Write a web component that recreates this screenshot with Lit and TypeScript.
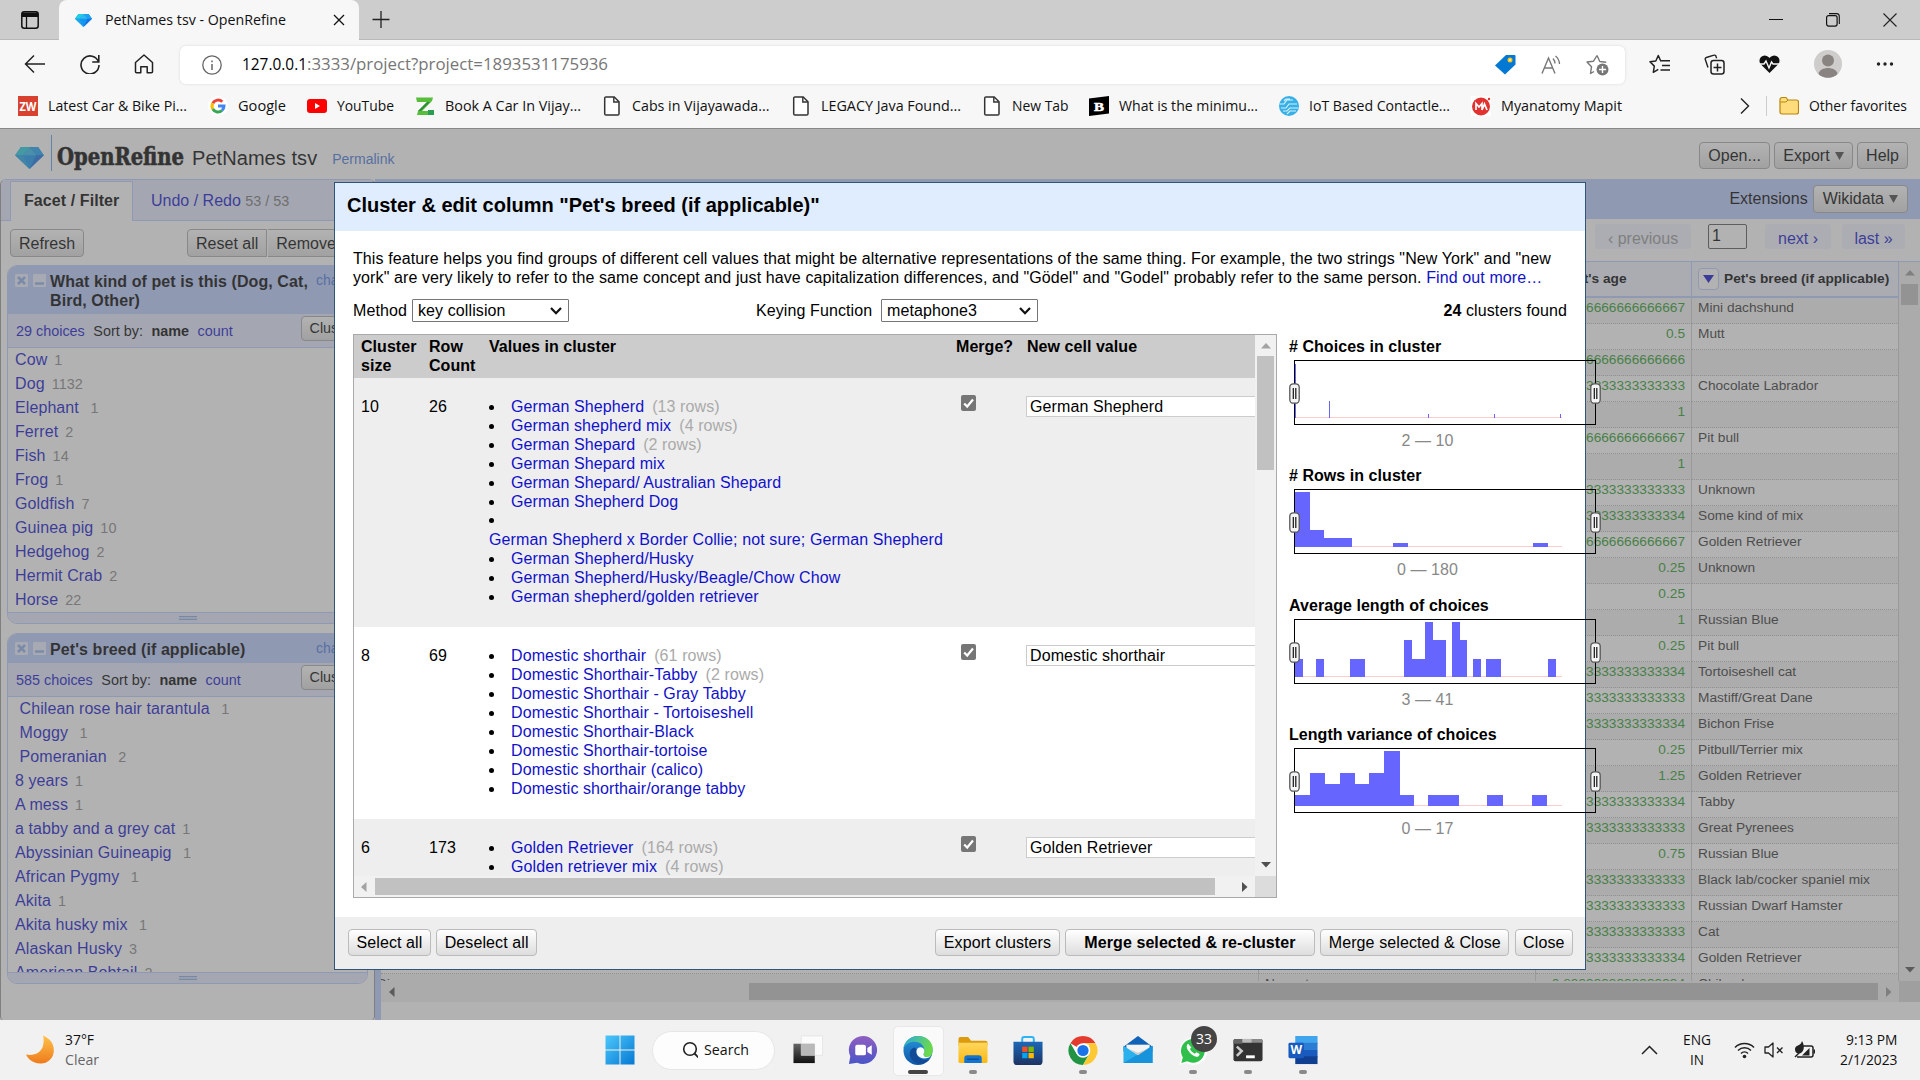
import { LitElement, html, svg, css, nothing } from "lit";
import { customElement } from "lit/decorators.js";

type Choice = { name: string; count: string; lead?: boolean; trail?: boolean };
type ClusterValue = { name: string; rows?: string; own?: boolean };
type Bar = [number, number, number];

const PET_KINDS: Choice[] = [
  { name: "Cow", count: "1" }, { name: "Dog", count: "1132" }, { name: "Elephant", count: "1", trail: true },
  { name: "Ferret", count: "2" }, { name: "Fish", count: "14" }, { name: "Frog", count: "1" },
  { name: "Goldfish", count: "7" }, { name: "Guinea pig", count: "10" }, { name: "Hedgehog", count: "2" },
  { name: "Hermit Crab", count: "2" }, { name: "Horse", count: "22" },
];

const BREEDS: Choice[] = [
  { name: "Chilean rose hair tarantula", count: "1", lead: true, trail: true },
  { name: "Moggy", count: "1", lead: true, trail: true }, { name: "Pomeranian", count: "2", lead: true, trail: true },
  { name: "8 years", count: "1" }, { name: "A mess", count: "1" }, { name: "a tabby and a grey cat", count: "1" },
  { name: "Abyssinian Guineapig", count: "1", trail: true }, { name: "African Pygmy", count: "1", trail: true },
  { name: "Akita", count: "1" }, { name: "Akita husky mix", count: "1", trail: true },
  { name: "Alaskan Husky", count: "3" }, { name: "American Bobtail", count: "2" },
];

const ROWS: [string, string][] = [
  ["0.16666666666666667", "Mini dachshund"], ["0.5", "Mutt"], ["0.41666666666666666", ""],
  ["0.08333333333333333", "Chocolate Labrador"], ["1", ""], ["0.16666666666666667", "Pit bull"], ["1", ""],
  ["0.08333333333333333", "Unknown"], ["0.8333333333333334", "Some kind of mix"],
  ["0.16666666666666667", "Golden Retriever"], ["0.25", "Unknown"], ["0.25", ""], ["1", "Russian Blue"],
  ["0.25", "Pit bull"], ["0.8333333333333334", "Tortoiseshell cat"], ["0.08333333333333333", "Mastiff/Great Dane"],
  ["0.8333333333333334", "Bichon Frise"], ["0.25", "Pitbull/Terrier mix"], ["1.25", "Golden Retriever"],
  ["0.8333333333333334", "Tabby"], ["0.08333333333333333", "Great Pyrenees"], ["0.75", "Russian Blue"],
  ["0.08333333333333333", "Black lab/cocker spaniel mix"], ["0.08333333333333333", "Russian Dwarf Hamster"],
  ["0.08333333333333333", "Cat"], ["0.8333333333333334", "Golden Retriever"], ["0.8333333333333334", "Chihuahua"],
];

const CLUSTERS: { size: string; rows: string; value: string; values: ClusterValue[] }[] = [
  {
    size: "10", rows: "26", value: "German Shepherd",
    values: [
      { name: "German Shepherd", rows: "(13 rows)" }, { name: "German shepherd mix", rows: "(4 rows)" },
      { name: "German Shepard", rows: "(2 rows)" }, { name: "German Shepard mix" },
      { name: "German Shepard/ Australian Shepard" }, { name: "German Shepherd Dog" },
      { name: "German Shepherd x Border Collie; not sure; German Shepherd", own: true },
      { name: "German Shepherd/Husky" }, { name: "German Shepherd/Husky/Beagle/Chow Chow" },
      { name: "German shepherd/golden retriever" },
    ],
  },
  {
    size: "8", rows: "69", value: "Domestic shorthair",
    values: [
      { name: "Domestic shorthair", rows: "(61 rows)" }, { name: "Domestic Shorthair-Tabby", rows: "(2 rows)" },
      { name: "Domestic Shorthair - Gray Tabby" }, { name: "Domestic Shorthair - Tortoiseshell" },
      { name: "Domestic Shorthair-Black" }, { name: "Domestic Shorthair-tortoise" },
      { name: "Domestic shorthair (calico)" }, { name: "Domestic shorthair/orange tabby" },
    ],
  },
  {
    size: "6", rows: "173", value: "Golden Retriever",
    values: [{ name: "Golden Retriever", rows: "(164 rows)" }, { name: "Golden retriever mix", rows: "(4 rows)" }],
  },
];

/* Histogram bars as [x, width, height] */
const FACETS: { title: string; range: string; bars: Bar[] }[] = [
  { title: "# Choices in cluster", range: "2 — 10", bars: [[0, 1, 54], [34, 1, 17], [133, 1, 4], [199, 1, 4], [265, 1, 4]] },
  { title: "# Rows in cluster", range: "0 — 180", bars: [[0, 14.5, 55], [14, 14.5, 17], [28, 29, 9], [98, 15, 4], [238, 15, 4]] },
  {
    title: "Average length of choices", range: "3 — 41",
    bars: [[0, 8, 18], [20.5, 8, 18], [54.5, 15, 18], [109, 8, 37], [117, 13, 18], [129.5, 8, 55], [137, 14, 37],
      [156.5, 8, 55], [164, 7.5, 37], [177.5, 8, 18], [191, 14.5, 18], [252.5, 8, 18]],
  },
  {
    title: "Length variance of choices", range: "0 — 17",
    bars: [[0, 15, 11], [14.5, 15.5, 33], [29, 16, 22], [44.5, 15, 33], [59, 15, 22], [74, 15, 33], [89, 15.5, 55],
      [104, 15, 11], [133, 30.5, 11], [192, 15.5, 11], [236.5, 15.5, 11]],
  },
];

const icon = (w: number, h: number, body: unknown, vb = `0 0 ${w} ${h}`) =>
  html`<svg class="ic" width=${w} height=${h} viewBox=${vb} fill="none">${body}</svg>`;

/* One line of interface text set to an exact advance width */
const fit = (text: string, w: number, size = 14.5, color = "#111") =>
  html`<svg class="ic" width=${w} height="20" overflow="visible"><text x="0" y="15" font-size=${size} fill=${color} textLength=${w} lengthAdjust="spacingAndGlyphs">${text}</text></svg>`;

const docIcon = () => icon(20, 20, svg`<path d="M4 .9h8.2L17 5.8v12a1.3 1.3 0 0 1-1.3 1.3H4a1.3 1.3 0 0 1-1.3-1.3V2.200A1.300 1.300 0 0 1 4 .9z" fill="#fff" stroke="#333" stroke-width="1.500"/><path d="M11.800 1v5h5" stroke="#333" stroke-width="1.400"/>`);

const diamond = (w: number, h: number) => icon(w, h, svg`
  <path d="M6 0h18l6 8.500L15 23 0 8.500z" fill="#1296f0"/><path d="M6 0h9L8 8.500H0z" fill="#22cfe0"/>
  <path d="M15 0h9l6 8.500h-8z" fill="#1ba2f4"/><path d="M15 0l7 8.500H8z" fill="#2fb9ee"/>
  <path d="M22 8.500h8L15 23z" fill="#1571e6"/><path d="M0 8.500h8L15 23z" fill="#1ca5ea"/>`, "0 0 30 23");

const BOOKMARKS: [string, number, () => unknown][] = [
  ["Latest Car & Bike Pi...", 139, () => icon(20, 20, svg`<rect width="20" height="20" fill="#d8412f"/><text x="1.500" y="14.500" font-size="11.500" font-weight="bold" fill="#fff" textLength="17" lengthAdjust="spacingAndGlyphs">ZW</text>`)],
  ["Google", 48, () => icon(20, 20, svg`<circle cx="10" cy="10" r="10" fill="#fff"/><g stroke-width="3"><path d="M14.300 5.800A6 6 0 0 0 4.800 7.200" stroke="#ea4335"/><path d="M4.800 7.200a6 6 0 0 0 0 5.800" stroke="#fbbc05"/><path d="M4.800 13a6 6 0 0 0 9.200 1.500" stroke="#34a853"/><path d="M14 14.500A6 6 0 0 0 16 10h-6" stroke="#4285f4"/></g>`)],
  ["YouTube", 57, () => icon(20, 20, svg`<rect y="3" width="20" height="14" rx="3" fill="#f00"/><path d="M8 7l5 3-5 3z" fill="#fff"/>`)],
  ["Book A Car In Vijay...", 136, () => icon(20, 20, svg`<path d="M1 1.500h17l-1 3.500L7 15h11l-2 4H2l1-4L12 6H2z" fill="#57bd3b"/><path d="M3 15l9-9h3L6 15z" fill="#2c8d3a"/><path d="M13 14h6v5h-6z" fill="#2a9e50"/>`)],
  ["Cabs in Vijayawada...", 137.5, docIcon],
  ["LEGACY Java Found...", 140, docIcon],
  ["New Tab", 56.5, docIcon],
  ["What is the minimu...", 139, () => icon(20, 20, svg`<path d="M0 2.500L20 0v17.500L0 20z" fill="#000"/><text x="5" y="14.500" font-size="13" font-weight="bold" font-family="Liberation Serif, serif" fill="#fff" stroke="#fff" stroke-width=".5" textLength="10" lengthAdjust="spacingAndGlyphs">B</text>`)],
  ["IoT Based Contactle...", 141, () => icon(20, 20, svg`<circle cx="10" cy="10" r="10" fill="#36b0e6"/><path d="M1 8h4l3-4h6M2 12h5l3-4h8M4 15h4l3-3h8M8 18l3-3h6M5 5l2-2h4" stroke="#d5f0fb" stroke-width="1.200"/>`)],
  ["Myanatomy Mapit", 121, () => icon(20, 20, svg`<rect width="20" height="20" fill="#fff"/><circle cx="10" cy="10.500" r="9" fill="#e2322f"/><path d="M5 14V7.500l3 3.500 3-3.500V14M11 14l2.500-6L16 14" stroke="#fff" stroke-width="1.700"/><circle cx="18" cy="3" r="1.200" fill="#e2322f"/>`)],
];

const TASKS: { art: () => unknown; state?: string; badge?: string }[] = [
  { art: () => svg`<path d="M1 9h22v20H1z" fill="url(#tvd)"/><path d="M9 1h22v20H9z" fill="#fff" fill-opacity=".7" stroke="#ddd" stroke-width=".6"/><path d="M9 9h14v12H9z" fill="#b9b9b9"/>` },
  { art: () => svg`<path d="M16 1a14.500 14.500 0 1 1-6 27.700L1.500 30l1.400-8A14.500 14.500 0 0 1 16 1z" fill="url(#cht)"/><rect x="8" y="10" width="11" height="11" rx="2" fill="#fff"/><path d="M20.500 13.500L25 10.500v10l-4.500-3z" fill="#fff"/>` },
  {
    state: "active",
    art: () => svg`<circle cx="16" cy="16" r="15" fill="url(#edg)"/><path d="M31 12C29.500 5 23 1 16 1 8 1 1.500 7 1 14c2-4.500 6.500-7 11-7 7 0 10.500 4.500 10.500 9 0 2-1 3.500-1 4.500 0 1.500 2 2.500 4.500 2.500 3 0 5-3 5-7z" fill="url(#edn)"/><path d="M12.500 13c-6 1-7 10-.5 14.500 5 3.500 12 2.500 16-2.500-3 1.500-7.500 1-9.500-.5-3-2-4.500-5-3-8.500z" fill="#114a96"/><path d="M16 13.500c-2 1.500-2.300 5-.5 7.500 1.500 2 4 3.300 7 3.300 3 0 5.300-1 6.500-2.300-5 2-7.500-.5-7.300-2 .2-1.200 1.100-2 .8-4.200-.5-3-4-4-6.500-2.300z" fill="#f4fbff"/>`,
  },
  { state: "open", art: () => svg`<path d="M1 4a2 2 0 0 1 2-2h8l3 4h15a2 2 0 0 1 2 2v3H1z" fill="#dc9b0c"/><path d="M1 8h30v19a2 2 0 0 1-2 2H3a2 2 0 0 1-2-2z" fill="url(#fld)"/><path d="M7 29v-5a3 3 0 0 1 3-3h12a3 3 0 0 1 3 3v5z" fill="#1274cc"/><path d="M10 25h12" stroke="#0b4e9b" stroke-width="1.500"/>` },
  { art: () => svg`<path d="M10 8V4a2 2 0 0 1 2-2h8a2 2 0 0 1 2 2v4" stroke="#2bb5f2" stroke-width="2"/><path d="M1 7h30v20a4 4 0 0 1-4 4H5a4 4 0 0 1-4-4z" fill="url(#str)"/><path d="M10 12h5.500v5.500H10z" fill="#f25022"/><path d="M16.500 12H22v5.500h-5.500z" fill="#7fba00"/><path d="M10 18.500h5.500V24H10z" fill="#00a4ef"/><path d="M16.500 18.500H22V24h-5.500z" fill="#ffb900"/>` },
  { state: "open", art: () => svg`<circle cx="16" cy="16" r="15" fill="#fff"/><path d="M16 16L3 8.500A15 15 0 0 1 29 8.500H16z" fill="#e33b2e"/><path d="M3 8.500A15 15 0 0 0 16 31l6.500-11.500L16 16 9.500 19.500z" fill="#229342"/><path d="M29 8.500A15 15 0 0 1 16 31l6.500-11.500L22 10l-6-1.500z" fill="#fcc934"/><circle cx="16" cy="16" r="7.500" fill="#fff"/><circle cx="16" cy="16" r="5.800" fill="#1a73e8"/>` },
  { art: () => svg`<path d="M1 12L16 1l15 11v5H1z" fill="#0f62b8"/><path d="M4 10h24v10H4z" fill="#f3f3f3"/><path d="M1 11l15 10L31 11v18H1z" fill="#2bb0ee"/><path d="M1 29L31 11v18z" fill="#1793dc"/><path d="M6 14.300l10 6.500 10-6.500-10 4z" fill="#ccc"/>` },
  { state: "open", badge: "33", art: () => svg`<path d="M2 31l2-7.500A14.300 14.300 0 1 1 9.500 29z" fill="#fff"/><path d="M4 29l1.500-6A12.300 12.300 0 1 1 10 27.200z" fill="#30bf4a"/><path d="M11 9c-2 1-2 4 0 7s5 6 8.500 6.500c2 0 3.500-1.500 3.300-3l-3.300-1.700-1.700 1.500c-2-.8-4-2.800-5-4.800l1.500-1.700z" fill="#fff"/>` },
  { state: "open", art: () => svg`<rect x="1" y="4" width="30" height="23" rx="2" fill="#333"/><path d="M1 6a2 2 0 0 1 2-2h7v5H1z" fill="#666"/><path d="M10 4h10v4H10z" fill="#bbb"/><path d="M20 4h9a2 2 0 0 1 2 2v2H20z" fill="#8a8a8a"/><path d="M4.500 12l5 4.500-5 5" stroke="#ccc" stroke-width="2.600"/><path d="M14 21h9v3h-9z" fill="#fff"/>` },
  { state: "open", art: () => svg`<path d="M8 1h23v8H8z" fill="#41a5ee"/><path d="M8 8h23v7.500H8z" fill="#2b7cd3"/><path d="M8 15.500h23V23H8z" fill="#185abd"/><path d="M8 22h23v8H8z" fill="#103f91"/><rect x="1" y="8" width="16" height="16" rx="1.500" fill="#185abd"/><text x="3" y="20" font-size="12" font-weight="bold" fill="#fff" textLength="12" lengthAdjust="spacingAndGlyphs">W</text>` },
];

@customElement("app-root")
export class AppRoot extends LitElement {
  static styles = css`
    :host { display: flex; flex-direction: column; width: 1920px; height: 1080px; overflow: hidden;
      font: 16px/19px "Liberation Sans", Arial, sans-serif; color: #000; background: #fff; }
    * { box-sizing: border-box; }
    .ic { display: block; flex: none; }
    .ui { font-family: "Open Sans", "Noto Sans", sans-serif; }
    .link { color: #11c; }
    .grow { flex: 1; }

    .tabs { height: 40px; flex: none; display: flex; background: #cdcdcd; border-bottom: 1px solid #b9b9b9; }
    .tabs-menu { width: 59px; padding: 11px 0 0 21px; }
    .tab { width: 300px; height: 40px; background: #f7f7f7; border-radius: 8px 8px 0 0; display: flex; align-items: center; padding: 0 14px 0 16px; }
    .tab .t { margin-left: 13px; width: 229px; }
    .tab-new { padding: 9px 0 0 13px; }
    .win { display: flex; gap: 43px; padding: 13px 23px 0 0; }

    .bar { height: 49px; flex: none; background: #f7f7f7; display: flex; align-items: center; padding: 0 26px 1px 24px; }
    .bar .nav { display: flex; gap: 33px; width: 156px; }
    .address { width: 1445px; height: 38px; background: #fff; border-radius: 6px; box-shadow: 0 0 3px #d8d8d8; display: flex; align-items: center; padding: 0 16px 0 22px; margin-top: 1px; }
    .address .url { display: flex; margin-left: 20px; flex: 1; }
    .address .acts { display: flex; gap: 25px; align-items: center; }
    .tools { display: flex; flex: 1; justify-content: space-between; align-items: center; padding-left: 24px; }

    .marks { height: 39px; flex: none; background: #f7f7f7; display: flex; align-items: center; padding: 0 13px 5px 18px; }
    .mark { display: flex; gap: 10px; margin-right: 21px; align-items: center; }
    .sep { width: 1px; height: 20px; background: #ccc; margin: 0 12px 0 16px; }

    .page { position: relative; height: 892px; flex: none; border-top: 1px solid #888; background: #fff; display: flex; flex-direction: column; }
    .veil { position: absolute; inset: 0; background: #666; opacity: .5; }
    .head { height: 50px; flex: none; display: flex; padding: 0 12px 0 15px; }
    .brand { display: flex; align-items: center; padding-top: 7px; }
    .brand .rule { width: 1px; height: 36px; background: #6b9fe6; margin: -10px 5px 0 7px; }
    .brand .proj { font-size: 20px; line-height: 24px; margin-left: 7px; letter-spacing: .06px; }
    .brand .perma { font-size: 14px; color: #4779dc; margin: 4px 0 0 15px; }
    .head-btns { display: flex; gap: 4.5px; padding-top: 13px; }
    .btn { display: inline-flex; align-items: center; height: 27px; padding: 0 8px; border: 1px solid #aaa; border-radius: 4px; background: linear-gradient(#fff, #ddd); white-space: nowrap; flex: none; }
    .btn .ic { margin-left: 5px; }

    .body { flex: 1; display: grid; grid-template-columns: 375px 6px 1539px; min-height: 0; }
    .split { background: #bcf; }
    .left { border: 1px solid #999; border-top-color: #bcf; border-bottom: 0; border-radius: 6px 6px 4px 4px; overflow: hidden; display: flex; flex-direction: column; }
    .ltabs { height: 41px; flex: none; background: #e3e9ff; border-bottom: 1px solid #bcf; display: flex; padding: 1px 0 0 9px; }
    .ltab { width: 123px; height: 40px; border: 1px solid #bcf; border-bottom: 0; background: #fff; font-weight: bold; padding: 9px 0 0 13px; letter-spacing: .08px; }
    .ltab2 { padding: 10px 0 0 18px; }
    .ltab2 .small, .cnt { font-size: 14.4px; color: #777; }
    .lbtns { display: flex; padding: 8px 0 0 9px; }
    .lbtns .btn { height: 28px; }
    .reset { margin-left: 103px; border-radius: 4px 0 0 4px; }
    .remove { border-radius: 0 4px 4px 0; border-left: 0; margin-left: 1px; }
    .facet { margin: 8px 0 0 6px; width: 361px; flex: none; display: flex; flex-direction: column; border: 1px solid #bcf; border-radius: 10px; overflow: hidden; }
    .facet.kinds { height: 359px; }
    .facet.breeds { height: 351px; margin-top: 9px; }
    .fhead { background: #bcf; padding: 6px 0 4px 8px; display: flex; align-items: flex-start; flex: none; }
    .fbtn { margin: 2px 5px 0 0; }
    .fbtn:first-child { margin-left: -1px; }
    .ftitle { font-weight: bold; width: 266px; margin-left: -1px; letter-spacing: .08px; }
    .fchange { font-size: 14px; line-height: 17px; color: #4779dc; }
    .fctl { height: 34px; flex: none; background: #e3e9ff; border-bottom: 1px solid #bcf; padding: 2px 0 0 8px; font-size: 14.400px; display: flex; gap: 8.500px; align-items: center; }
    .fctl .btn { height: 25px; margin: -6px 0 0 0; }
    .fctl .push { width: 276px; display: flex; gap: 8.500px; }
    .flist { flex: 1; overflow: hidden; padding-left: 7px; line-height: 24px; letter-spacing: .09px; }
    .fitem { height: 24px; white-space: pre; display: flex; gap: 7px; }
    .cnt { color: #888; line-height: 25px; }
    .fgrip { height: 11px; flex: none; background: #e3e9ff; border-top: 1px solid #bcf; display: flex; justify-content: center; padding-top: 3px; }
    .fgrip i { width: 18px; height: 4px; background: #c5d6f7; border: solid #8faadf; border-width: 1px 0; margin-left: 1px; }

    .main { display: flex; flex-direction: column; overflow: hidden; }
    .ext { height: 40px; flex: none; background: #bcf; display: flex; justify-content: flex-end; padding: 6px 12px 0 0; line-height: 38px; }
    .ext .lbl { line-height: 27px; margin: 0 5px 0 0; }
    .ext .btn { height: 28px; padding: 0 9px 0 9px; }
    .pager { height: 42px; flex: none; display: flex; justify-content: flex-end; padding: 5px 15px 0 0; }
    .pg { height: 25px; line-height: 29px; background: #f1f4ff; color: #11c; border-radius: 3px; text-align: center; }
    .pg.off { width: 96px; color: #999; margin-right: 17px; padding-left: 0; }
    .pg.next { width: 66px; margin-right: 11px; }
    .pg.last { width: 63px; }
    .pnum { width: 39px; height: 25px; border: 1px solid #555; border-radius: 2px; margin: 0 18px 0 0; padding: 1px 0 0 3px; background: #fff; }
    .gridwrap { height: 720px; flex: none; display: flex; border-top: 1px solid #bcf; }
    .data { width: 1518px; overflow: hidden; font-size: 13.7px; }
    .dr { display: grid; grid-template-columns: 878px 277px 156px 207px; height: 26px; color: #333; }
    .dr > div { border-right: 1px solid #ccc; border-bottom: 1px dotted #bbb; padding: 1px 6px; line-height: 17px; white-space: nowrap; overflow: hidden; }
    .dr > div:first-child { padding-left: 0; text-indent: -5px; }
    .dr:nth-child(even) { background: #f2f2f2; }
    .dr .num { text-align: right; color: #299b29; }
    .dh { display: grid; grid-template-columns: 877px 277px 157px 207px; height: 36px; background: #eef2ff; font-weight: bold; border-bottom: 2px solid #bcf; }
    .dh > div { border-right: 1px solid #bcf; display: flex; align-items: center; padding: 0 0 1px 6px; gap: 5px; white-space: nowrap; }
    .dd { width: 21px; height: 22px; border: 1px solid #bcf; border-radius: 4px; background: #fff; display: flex; align-items: center; justify-content: center; }
    .vs { width: 21px; background: #f1f1f1; display: flex; flex-direction: column; align-items: center; padding: 8px 0; }
    .vs .thumb { width: 17px; background: #c1c1c1; }
    .hs { height: 21px; flex: none; display: flex; background: #f1f1f1; align-items: center; }
    .hs .thumb { height: 17px; background: #c1c1c1; }
    .hs .corner { width: 21px; height: 21px; background: #d8d8d8; }

    .dialog { position: absolute; left: 334px; top: 53px; width: 1252px; height: 788px; background: #fff; border: 1px solid #315479; display: flex; flex-direction: column; letter-spacing: .1px; }
    .dtitle { height: 48px; flex: none; background: #e0edff; font-size: 20px; font-weight: bold; padding: 13px 0 0 12px; letter-spacing: 0; }
    .dbody { flex: 1; padding: 18px 18px 0; display: flex; flex-direction: column; white-space: nowrap; }
    .opts { display: flex; align-items: center; height: 23px; margin: 12px 0; flex: none; }
    .select { height: 23px; width: 157px; border: 1px solid #767676; border-radius: 1px; display: flex; align-items: center; justify-content: space-between; padding: 0 6px 0 5px; }
    .found { flex: 1; text-align: right; }
    .cols { display: flex; }
    .clusters { width: 924px; height: 564px; border: 1px solid #aaa; display: grid; grid-template-columns: 901px 21px; grid-template-rows: 541px 21px; flex: none; }
    .cview { overflow: hidden; }
    .crow { display: grid; grid-template-columns: 68px 60px 467px 71px 250px; padding: 19px 0 21px 7px; }
    .crow.h { height: 43px; background: #ccc; font-weight: bold; padding: 2px 0 0 7px; letter-spacing: .05px; }
    .crow.odd { background: #eee; }
    .values { margin: 0; padding: 0; list-style: none; }
    .values li { display: flex; }
    .values li::before { content: ""; width: 5px; height: 5px; border-radius: 50%; background: #000; margin: 7.500px 17.500px 0 -.5px; flex: none; }
    .values .own { flex-direction: column; height: 38px; }
    .values .own::before { margin: 7px 0 7px -.5px; }
    .values .rows { color: #aaa; margin-left: 8px; }
    .chk { width: 15px; height: 16px; border-radius: 2px; background: #767676; margin: -2px 0 0 5px; }
    .edit { border: 1px solid #ccc; height: 21px; width: 250px; background: #fff; margin: -1px 0 0 -1px; padding: 0 3px; }
    .clusters .hs { height: 21px; }
    .facets { margin-left: 12px; padding-top: 3px; letter-spacing: .05px; }
    .hist { height: 129.33px; width: 290px; }
    .hist b { display: block; }
    .frame { position: relative; width: 302px; height: 65px; border: 1px solid #000; margin: 4px 0 0 5px; }
    .frame .plot { display: block; margin-top: 2px; }
    .grab { position: absolute; top: 22px; width: 11px; height: 21px; }
    .grab.l { left: -6px; } .grab.r { right: -6px; }
    .range { color: #888; text-align: center; width: 277px; margin-top: 6px; }
    .dfoot { height: 52px; flex: none; background: #eee; display: flex; gap: 5.3px; padding: 12px 12px 0 13px; }
    .dfoot .btn { height: 27px; border-color: #bbb; padding: 0 7.500px; }
    .dfoot .wide { font-weight: bold; padding: 0 18px; width: 250px; justify-content: center; letter-spacing: .08px; }

    .task { height: 60px; flex: none; background: #f1f1f1; display: flex; align-items: center; }
    .weather { width: 592px; display: flex; padding-left: 25px; gap: 10px; align-items: center; }
    .stack { display: flex; flex-direction: column; }
    .cell { width: 55px; height: 60px; display: flex; flex-direction: column; align-items: center; padding-top: 15px; position: relative; }
    .cell .dot { width: 8px; height: 4px; border-radius: 2px; background: #8a8a8a; margin-top: 4px; }
    .cell.active .dot { width: 20px; background: #444; }
    .cell.active::before { content: ""; position: absolute; left: 3px; top: 6px; width: 49px; height: 48px; border-radius: 5px; background: #fafafa; border: 1px solid #e8e8e8; }
    .cell.active > * { position: relative; }
    .badge { position: absolute; left: 26px; top: 6px; width: 26px; height: 26px; border-radius: 50%; background: #444; color: #fff; font-size: 14px; line-height: 26px; text-align: center; }
    .search { width: 123px; height: 39px; border-radius: 20px; background: #fdfdfd; border: 1px solid #e6e6e6; margin: 0 5.500px 0 4.500px; display: flex; align-items: center; gap: 6px; padding-left: 27px; }
    .tray { display: flex; align-items: center; padding-right: 23px; }
  `;

  private arrow(dir: string, color = "#505050") {
    const d: Record<string, string> = { up: "M0 5.500L5 0l5 5.500z", down: "M0 0h10L5 5.500z", left: "M5.500 0v10L0 5z", right: "M0 0v10l5.500-5z" };
    const flat = dir === "up" || dir === "down";
    return icon(flat ? 10 : 6, flat ? 6 : 10, svg`<path d=${d[dir]} fill=${color}/>`);
  }

  private browser() {
    return html`
      <div class="tabs ui">
        <div class="tabs-menu">${icon(18, 18, svg`<rect x=".8" y=".8" width="16.400" height="16.400" rx="2.500" stroke="#111" stroke-width="1.500"/><path d="M1 1.500h16V6H1z" fill="#111"/><path d="M5.500 5v12" stroke="#111" stroke-width="1.300"/>`)}</div>
        <div class="tab">${diamond(17, 13)}<div class="t">${fit("PetNames tsv - OpenRefine", 181, 14.5)}</div>
          ${icon(12, 12, svg`<path d="M1 1l10 10M11 1L1 11" stroke="#111" stroke-width="1.300"/>`)}</div>
        <div class="tab-new">${icon(18, 20, svg`<path d="M9 2v17M.5 10.500h17" stroke="#222" stroke-width="1.300"/>`)}</div>
        <div class="grow"></div>
        <div class="win">
          ${icon(14, 14, svg`<path d="M0 6.500h14" stroke="#111"/>`)}
          ${icon(14, 14, svg`<rect x=".6" y="2.600" width="10.500" height="10.500" rx="2" stroke="#111" stroke-width="1.200"/><path d="M3 .6h7.500a2.800 2.800 0 0 1 2.800 2.800V11" stroke="#111" stroke-width="1.100"/>`)}
          ${icon(14, 14, svg`<path d="M.5.5l13 13M13.500.5l-13 13" stroke="#222" stroke-width="1.100"/>`)}
        </div>
      </div>
      <div class="bar ui">
        <div class="nav">
          ${icon(22, 20, svg`<path d="M21 10H2M10 1.500L1.500 10l8.500 8.500" stroke="#222" stroke-width="1.500"/>`)}
          ${icon(22, 20, svg`<path d="M19.500 8A9 9 0 1 0 20 11M19.800 1v7h-6.600" stroke="#222" stroke-width="1.600"/>`)}
          ${icon(20, 20, svg`<path d="M1.500 8.500L10 1l8.500 7.500v9.300a1 1 0 0 1-1 1h-4.300v-6H6.800v6H2.500a1 1 0 0 1-1-1z" stroke="#222" stroke-width="1.500" stroke-linejoin="round"/>`)}
        </div>
        <div class="address">
          ${icon(20, 20, svg`<circle cx="10" cy="10" r="9.200" stroke="#666" stroke-width="1.300"/><path d="M10 9v6M10 5.500v1.800" stroke="#666" stroke-width="1.500"/>`)}
          <div class="url">${fit("127.0.0.1", 65, 16.5, "#000")}${fit(":3333/project?project=1893531175936", 301, 16.5, "#767676")}</div>
          <div class="acts">
            ${icon(22, 21, svg`<path d="M12 1h8.500a1 1 0 0 1 1 1v8.500L11 20.500 1 11.500z" fill="#0078d4"/><circle cx="16" cy="6" r="2.500" fill="#ffc20e"/><circle cx="16" cy="6" r="1" fill="#fff"/>`)}
            ${icon(20, 20, svg`<path d="M1 18.500L7.500 3 14 18.500M3.500 13h8" stroke="#777" stroke-width="1.400"/><path d="M12 3.500a8 8 0 0 1 2 5M14.500 1a11 11 0 0 1 4 8" stroke="#777" stroke-width="1.300"/>`)}
            ${icon(23, 22, svg`<path d="M11 1.500l2.800 6 6.400.8M8 17.500l-3.500 2 1-6.800L1 8l6.500-.800L11 1.500" stroke="#777" stroke-width="1.400" stroke-linejoin="round"/><circle cx="16.500" cy="15.500" r="6" fill="#777"/><path d="M16.500 12v7M13 15.500h7" stroke="#fff" stroke-width="1.400"/>`)}
          </div>
        </div>
        <div class="tools">
          ${icon(21, 20, svg`<path d="M11.500 6.500L9.300 1.500 6.800 7 1 7.800l4.300 4.300-1 6.200 5-3" stroke="#222" stroke-width="1.500" stroke-linejoin="round"/><path d="M11 6.800h10M13 11.500h8M11.500 16h9.500" stroke="#222" stroke-width="1.500"/>`)}
          ${icon(21, 21, svg`<path d="M4 13.500L1.300 5.500a1.500 1.500 0 0 1 1-2L10 1.200a1.500 1.500 0 0 1 2 1l.6 2" stroke="#222" stroke-width="1.400"/><rect x="7" y="6.500" width="13" height="13.500" rx="2.500" stroke="#222" stroke-width="1.500"/><path d="M13.500 9.500v8M9.500 13.500h8" stroke="#222" stroke-width="1.500"/>`)}
          ${icon(21, 19, svg`<path d="M10.500 18L2 9.500A5.300 5.300 0 0 1 9.500 2l1 1 1-1A5.300 5.300 0 0 1 19 9.500z" fill="#111"/><path d="M0 9h5l2-3 3 7 2.500-6 1.500 2h7" stroke="#f7f7f7" stroke-width="1.400"/>`)}
          ${icon(28, 28, svg`<circle cx="14" cy="14" r="14" fill="#cfcdcb"/><circle cx="14" cy="10.500" r="6" fill="#898481"/><path d="M4.500 24c1-8 18-8 19 0A14 14 0 0 1 4.500 24z" fill="#898481"/>`)}
          ${icon(18, 4, svg`<circle cx="2.500" cy="2" r="1.700" fill="#222"/><circle cx="9" cy="2" r="1.700" fill="#222"/><circle cx="15.500" cy="2" r="1.700" fill="#222"/>`)}
        </div>
      </div>
      <div class="marks ui">
        ${BOOKMARKS.map(([t, w, ic]) => html`<div class="mark">${ic()}${fit(t, w)}</div>`)}
        <div class="grow"></div>
        ${icon(10, 18, svg`<path d="M1 1.500L8.500 9 1 16.500" stroke="#222" stroke-width="1.400"/>`)}
        <div class="sep"></div>
        ${icon(20, 20, svg`<path d="M1 3.500A2 2 0 0 1 3 1.500h4l2 2.500h8.500a2 2 0 0 1 2 2v10a2 2 0 0 1-2 2H3a2 2 0 0 1-2-2z" fill="#ffdd7d" stroke="#b8860b" stroke-width="1.200"/><path d="M1.500 6h5.500L9 4" stroke="#b8860b"/>`)}
        <div style="width:10px"></div>${fit("Other favorites", 98)}
      </div>`;
  }

  private facet(cls: string, title: unknown, total: string, items: Choice[]) {
    return html`<div class="facet ${cls}">
      <div class="fhead">
        ${["M3 3l7 7M10 3l-7 7", "M2 9.500h9"].map((d) => html`<div class="fbtn">${icon(13, 13, svg`<rect width="13" height="13" rx="1" fill="#e9eeff"/><path d=${d} stroke="#8fb0ec" stroke-width="2.600"/>`)}</div>`)}
        <div class="ftitle">${title}</div><div class="fchange">change</div>
      </div>
      <div class="fctl"><div class="push"><span class="link">${total}</span><span>Sort by:</span><b>name</b><span class="link">count</span></div><div class="btn">Cluster</div></div>
      <div class="flist">${items.map((c) => html`<div class="fitem"><span class="link">${(c.lead ? " " : "") + c.name + (c.trail ? " " : "")}</span><span class="cnt">${c.count}</span></div>`)}</div>
      <div class="fgrip"><i></i></div>
    </div>`;
  }

  private project() {
    const tri = icon(9, 8, svg`<path d="M0 0h9L4.500 8z" fill="#444"/>`);
    return html`
      <div class="head">
        <div class="brand">${diamond(29, 22)}<div class="rule"></div>
          <svg class="ic" width="128" height="30" overflow="visible"><text x="0" y="22" font-family="DejaVu Serif Condensed, DejaVu Serif, serif" font-weight="bold" font-size="23.500" stroke="#000" stroke-width=".6" textLength="127" lengthAdjust="spacingAndGlyphs">OpenRefine</text></svg>
          <div class="proj">PetNames tsv</div><div class="perma">Permalink</div></div>
        <div class="grow"></div>
        <div class="head-btns"><div class="btn">Open...</div><div class="btn">Export ${tri}</div><div class="btn">Help</div></div>
      </div>
      <div class="body">
        <div class="left">
          <div class="ltabs"><div class="ltab">Facet / Filter</div><div class="ltab2"><span class="link">Undo / Redo</span> <span class="small">53 / 53</span></div></div>
          <div class="lbtns"><div class="btn">Refresh</div><div class="btn reset">Reset all</div><div class="btn remove">Remove All</div></div>
          ${this.facet("kinds", html`What kind of pet is this (Dog, Cat,<br>Bird, Other)`, "29 choices", PET_KINDS)}
          ${this.facet("breeds", "Pet's breed (if applicable)", "585 choices", BREEDS)}
        </div>
        <div class="split"></div>
        <div class="main">
          <div class="ext"><div class="lbl">Extensions</div><div class="btn">Wikidata ${tri}</div></div>
          <div class="pager"><div class="pg off">‹ previous</div><div class="pnum">1</div><div class="pg next">next ›</div><div class="pg last">last »</div></div>
          <div class="gridwrap">
            <div class="data">
              <div class="dh"><div></div><div></div>
                ${["Pet's age", "Pet's breed (if applicable)"].map((t) => html`<div><span class="dd">${icon(11, 8, svg`<path d="M0 0h11L5.500 8z" fill="#11c"/>`)}</span>${t}</div>`)}
              </div>
              ${ROWS.map(([age, breed], i) => html`<div class="dr"><div>${i === 26 ? "Ginger" : nothing}</div><div>${i === 26 ? "Nugget" : nothing}</div><div class="num">${age}</div><div>${breed}</div></div>`)}
            </div>
            <div class="vs">${this.arrow("up", "#999")}<div style="height:8px"></div><div class="thumb" style="height:21px"></div><div class="grow"></div>${this.arrow("down")}</div>
          </div>
          <div class="hs"><div style="width:8px"></div>${this.arrow("left")}<div style="width:354px"></div><div class="thumb" style="width:1129px"></div><div style="width:8px"></div>${this.arrow("right", "#999")}<div class="grow"></div><div class="corner"></div></div>
        </div>
      </div>`;
  }

  private grab(side: string) {
    return html`<svg class="grab ${side}" viewBox="0 0 11 21"><rect x=".8" y=".8" width="9.400" height="19.400" rx="3.500" fill="#f4f4f4" stroke="#555" stroke-width="1.300"/><path d="M4.300 5v11M6.800 5v11" stroke="#111" stroke-width="1.200"/></svg>`;
  }

  private dialog() {
    const chev = icon(12, 8, svg`<path d="M1 1l5 5.200L11 1" stroke="#111" stroke-width="2.200"/>`);
    return html`<div class="dialog">
      <div class="dtitle">Cluster &amp; edit column "Pet's breed (if applicable)"</div>
      <div class="dbody">
        <div>This feature helps you find groups of different cell values that might be alternative representations of the same thing. For example, the two strings "New York" and "new<br>york" are very likely to refer to the same concept and just have capitalization differences, and "Gödel" and "Godel" probably refer to the same person. <span class="link">Find out more…</span></div>
        <div class="opts"><div style="width:59px">Method</div><div class="select">key collision ${chev}</div><div style="width:187px"></div><div style="width:125px">Keying Function</div><div class="select">metaphone3 ${chev}</div><div class="found"><b>24</b> clusters found</div></div>
        <div class="cols">
          <div class="clusters">
            <div class="cview">
              <div class="crow h"><div>Cluster<br>size</div><div>Row<br>Count</div><div>Values in cluster</div><div>Merge?</div><div>New cell value</div></div>
              ${CLUSTERS.map((c, i) => html`<div class="crow ${i % 2 ? "" : "odd"}">
                <div>${c.size}</div><div>${c.rows}</div>
                <ul class="values">${c.values.map((v) => html`<li class=${v.own ? "own" : ""}><span class="link">${v.name}</span>${v.rows ? html`<span class="rows">${v.rows}</span>` : nothing}</li>`)}</ul>
                <div><div class="chk">${icon(15, 16, svg`<path d="M3.200 8.500l3 3L12 4.500" stroke="#fff" stroke-width="2.200"/>`)}</div></div>
                <div><div class="edit">${c.value}</div></div>
              </div>`)}
            </div>
            <div class="vs">${this.arrow("up", "#a3a3a3")}<div style="height:7px"></div><div class="thumb" style="height:114px"></div><div class="grow"></div>${this.arrow("down")}</div>
            <div class="hs"><div style="width:7px"></div>${this.arrow("left", "#a3a3a3")}<div style="width:8px"></div><div class="thumb" style="width:840px"></div><div class="grow"></div>${this.arrow("right")}<div style="width:7px"></div></div>
            <div class="hs corner" style="background:#dcdcdc"></div>
          </div>
          <div class="facets">
            ${FACETS.map((f) => html`<div class="hist"><b>${f.title}</b>
              <div class="frame"><svg class="plot" width="300" height="56" shape-rendering="crispEdges"><path d="M0 54.500h267" stroke="#fcc" />${f.bars.map(([x, w, h]) => svg`<rect x=${x} y=${55 - h} width=${w} height=${h} fill="#66f"/>`)}</svg>${this.grab("l")}${this.grab("r")}</div>
              <div class="range">${f.range}</div></div>`)}
          </div>
        </div>
      </div>
      <div class="dfoot"><div class="btn">Select all</div><div class="btn">Deselect all</div><div class="grow"></div><div class="btn">Export clusters</div><div class="btn wide">Merge selected &amp; re-cluster</div><div class="btn">Merge selected &amp; Close</div><div class="btn">Close</div></div>
    </div>`;
  }

  private taskbar() {
    const grad = (id: string, a: string, b: string, x2 = "0", y2 = "1") => svg`<linearGradient id=${id} x1="0" y1="0" x2=${x2} y2=${y2}><stop offset="0" stop-color=${a}/><stop offset="1" stop-color=${b}/></linearGradient>`;
    const defs = svg`<defs>${grad("tvd", "#666", "#111")}${grad("cht", "#8f5fc0", "#4a55c8")}${grad("edg", "#2795dc", "#0e56a8")}${grad("edn", "#2aa8e0", "#6ad94c", "1", ".3")}${grad("fld", "#ffd75e", "#fcb912")}${grad("str", "#1c68b8", "#1d3263")}</defs>`;
    return html`<div class="task ui">
      <div class="weather">
        ${icon(30, 30, svg`<defs>${grad("mn", "#ffc34a", "#ee7a1c")}</defs><path d="M18 0.500c7 3 11 8 10.800 15A13 13 0 0 1 15 28.500C9 28.500 3.500 25 1 19.500c8 1.500 14-1.500 16.500-7 1.500-4.500 1.500-8 .5-12z" fill="url(#mn)"/>`)}
        <div class="stack">${fit("37°F", 29, 14.5)}${fit("Clear", 34, 14.5, "#666")}</div>
      </div>
      <div class="cell">${icon(30, 30, svg`<defs>${grad("ws", "#4cc8fa", "#0678d4", "1", "1")}</defs><path d="M.5.5h14v14H.5zM15.500.5h14v14h-14zM.5 15.500h14v14H.5zM15.500 15.500h14v14h-14z" fill="url(#ws)"/>`)}</div>
      <div class="search">${icon(18, 18, svg`<circle cx="10" cy="8" r="6.300" stroke="#222" stroke-width="1.600"/><path d="M5.500 12.500L1 17" stroke="#222" stroke-width="1.800" transform="matrix(-1 0 0 1 20 0)"/>`)}${fit("Search", 45, 14.5)}</div>
      ${TASKS.map((t) => html`<div class="cell ${t.state ?? ""}"><svg class="ic" width="32" height="31" viewBox="0 0 32 32" fill="none">${defs}${t.art()}</svg>${t.state ? html`<div class="dot"></div>` : nothing}${t.badge ? html`<div class="badge">${t.badge}</div>` : nothing}</div>`)}
      <div class="grow"></div>
      <div class="tray">
        ${icon(17, 10, svg`<path d="M1 9l7.500-7.500L16 9" stroke="#222" stroke-width="1.500"/>`)}
        <div class="stack" style="margin-left:25px;align-items:center">${fit("ENG", 28, 14.5)}${fit("IN", 14, 14.5)}</div>
        <div style="width:23px"></div>
        ${icon(21, 18, svg`<path d="M1 6.500a13.500 13.500 0 0 1 19 0M4 9.500a9.300 9.300 0 0 1 13 0M7 12.500a5 5 0 0 1 7 0" stroke="#222" stroke-width="1.500"/><circle cx="10.500" cy="15.500" r="1.800" fill="#222"/>`)}
        <div style="width:9px"></div>
        ${icon(20, 18, svg`<path d="M1 6h3.500L9 2v14l-4.500-4H1z" stroke="#222" stroke-width="1.300" stroke-linejoin="round"/><path d="M13 6.500l5.500 5.500M18.500 6.500L13 12" stroke="#222" stroke-width="1.300"/>`)}
        <div style="width:10px"></div>
        ${icon(21, 18, svg`<path d="M9 5h8a2 2 0 0 1 2 2v7a2 2 0 0 1-2 2H3" stroke="#222" stroke-width="1.500"/><path d="M20.300 8.500v4" stroke="#222" stroke-width="1.600"/><path d="M8 0c3 5 2 10-1 12-3 1-6 0-6-3.500C1 5.500 3 5 5 4c1.500-.8 2.500-2 3-4z" fill="#222"/><path d="M8 14.500L15.500 7v7.500z" fill="#222"/><path d="M1 16l5-5" stroke="#222" stroke-width="1.500"/>`)}
        <div class="stack" style="margin-left:25px;align-items:flex-end">${fit("9:13 PM", 51.5, 14.5)}${fit("2/1/2023", 57.5, 14.5)}</div>
      </div>
    </div>`;
  }

  render() {
    return html`${this.browser()}
      <div class="page">${this.project()}<div class="veil"></div>${this.dialog()}</div>
      ${this.taskbar()}`;
  }
}
